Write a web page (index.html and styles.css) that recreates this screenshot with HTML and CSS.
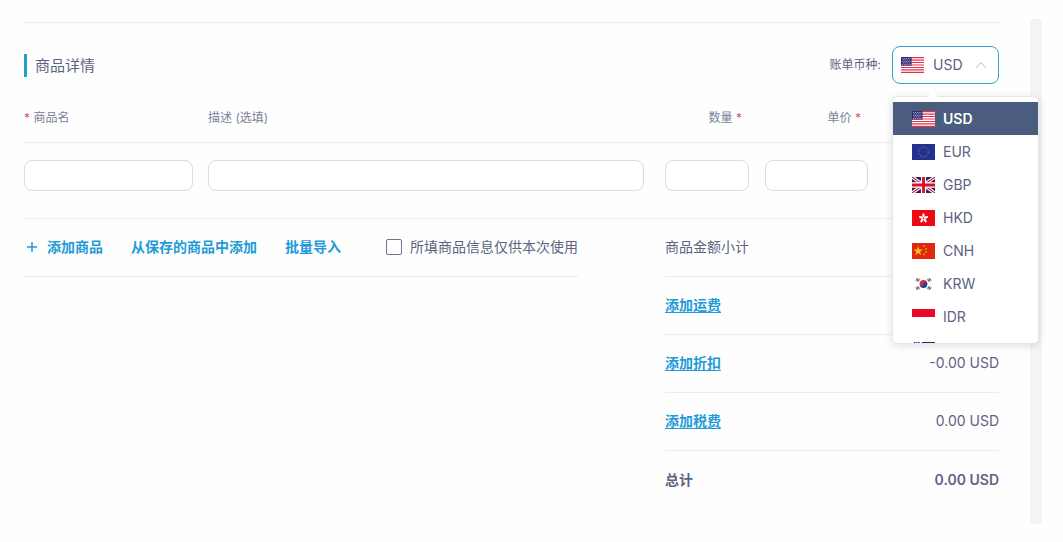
FILE: index.html
```html
<!DOCTYPE html>
<html lang="zh-CN">
<head>
<meta charset="utf-8">
<meta name="viewport" content="width=device-width, initial-scale=1">
<title>商品详情</title>
<link rel="stylesheet" href="styles.css">
</head>
<body>
<svg class="sprite" aria-hidden="true">
  <symbol id="us" viewBox="0 0 24 16" preserveAspectRatio="none">
    <path fill="#fff" d="M0 0h24v16H0z"/>
    <path stroke="#e8304c" stroke-width="1.23" d="M0 .6h24M0 3.1h24M0 5.5h24M0 8h24M0 10.5h24M0 12.9h24M0 15.4h24"/>
    <path fill="#27276f" d="M0 0h11v8.6H0z"/>
    <path stroke="#fff" stroke-width=".8" stroke-dasharray=".9 1.1" d="M1 1.4h9.500M2 2.900h8M1 4.400h9.500M2 5.900h8M1 7.400h9.500"/>
  </symbol>
  <symbol id="eu" viewBox="0 0 24 16" preserveAspectRatio="none">
    <path fill="#24308f" d="M0 0h24v16H0z"/>
    <circle cx="12" cy="8" r="5" fill="none" stroke="#a5a060" stroke-width="1" stroke-dasharray="1 1.618"/>
  </symbol>
  <symbol id="gb" viewBox="0 0 24 16" preserveAspectRatio="none">
    <path fill="#1c2466" d="M0 0h24v16H0z"/>
    <path stroke="#fff" stroke-width="3.400" d="M0 0l24 16M24 0L0 16"/>
    <path stroke="#d8203c" stroke-width="1.200" d="M0 0l24 16M24 0L0 16"/>
    <path stroke="#fff" stroke-width="5.400" d="M12 0v16M0 8h24"/>
    <path stroke="#d8102c" stroke-width="3" d="M12 0v16M0 8h24"/>
  </symbol>
  <symbol id="hk" viewBox="0 0 24 16" preserveAspectRatio="none">
    <path fill="#ee0a14" d="M0 0h24v16H0z"/>
    <g fill="#fff">
      <ellipse cx="12" cy="5.500" rx="1.200" ry="2.300"/>
      <ellipse cx="12" cy="5.500" rx="1.200" ry="2.300" transform="rotate(72 12 8.200)"/>
      <ellipse cx="12" cy="5.500" rx="1.200" ry="2.300" transform="rotate(144 12 8.200)"/>
      <ellipse cx="12" cy="5.500" rx="1.200" ry="2.300" transform="rotate(216 12 8.200)"/>
      <ellipse cx="12" cy="5.500" rx="1.200" ry="2.300" transform="rotate(288 12 8.200)"/>
    </g>
    <circle cx="12" cy="8.200" r=".7" fill="#ee0a14"/>
  </symbol>
  <symbol id="cn" viewBox="0 0 24 16" preserveAspectRatio="none">
    <path fill="#de2910" d="M0 0h24v16H0z"/>
    <path fill="#ffc21a" d="M6.500 3l1.200 3.500h3.700l-3 2.200 1.200 3.600-3.100-2.200-3.100 2.200 1.200-3.600-3-2.200h3.700z"/>
    <g fill="#f5a81a"><circle cx="12.500" cy="3.200" r=".9"/><circle cx="14.700" cy="5.800" r=".9"/><circle cx="14.700" cy="9" r=".9"/><circle cx="12.500" cy="11.500" r=".9"/></g>
  </symbol>
  <symbol id="kr" viewBox="0 0 24 16" preserveAspectRatio="none">
    <path fill="#fff" d="M0 0h24v16H0z"/>
    <path fill="#d52b43" d="M8 8a4 4 0 0 1 8 0z"/>
    <path fill="#24468f" d="M8 8a4 4 0 0 0 8 0z"/>
    <circle cx="10" cy="8" r="2" fill="#d52b43"/><circle cx="14" cy="8" r="2" fill="#24468f"/>
    <path stroke="#333" stroke-width=".9" d="M4 4.500l2-2.500M5 5.200l2-2.500M6 5.900l2-2.500M4 11.500l2 2.500M5 10.800l2 2.500M6 10.100l2 2.500M20 4.500l-2-2.500M19 5.200l-2-2.500M18 5.900l-2-2.500M20 11.500l-2 2.500M19 10.800l-2 2.500M18 10.100l-2 2.500"/>
  </symbol>
  <symbol id="id" viewBox="0 0 24 16" preserveAspectRatio="none">
    <path fill="#fff" d="M0 0h24v16H0z"/><path fill="#e60a24" d="M0 0h24v8H0z"/>
  </symbol>
  <symbol id="au" viewBox="0 0 24 16" preserveAspectRatio="none">
    <path fill="#1c2c78" d="M0 0h24v16H0z"/>
    <path stroke="#fff" stroke-width="1.800" d="M0 0l10 8M10 0L0 8"/>
    <path stroke="#fff" stroke-width="2.600" d="M5 0v8M0 4h10"/>
    <path stroke="#d8203c" stroke-width="1.400" d="M5 0v8M0 4h10"/>
  </symbol>
</svg>

<div class="page">
  <main class="content">
    <header class="section-head">
      <h1 class="section-title">商品详情</h1>
      <div class="currency">
        <label class="currency-label" for="currency">账单币种:</label>
        <div class="currency-box">
          <svg class="flag" aria-hidden="true"><use href="#us"/></svg>
          <select class="currency-select" id="currency"><option>USD</option></select>
          <svg class="chevron" viewBox="0 0 12 8" aria-hidden="true"><path d="M1 7l5-5.500L11 7"/></svg>
          <div class="menu">
            <ul class="menu-list">
              <li><button class="option selected" type="button"><svg class="flag" aria-hidden="true"><use href="#us"/></svg>USD</button></li>
              <li><button class="option" type="button"><svg class="flag" aria-hidden="true"><use href="#eu"/></svg>EUR</button></li>
              <li><button class="option" type="button"><svg class="flag" aria-hidden="true"><use href="#gb"/></svg>GBP</button></li>
              <li><button class="option" type="button"><svg class="flag" aria-hidden="true"><use href="#hk"/></svg>HKD</button></li>
              <li><button class="option" type="button"><svg class="flag" aria-hidden="true"><use href="#cn"/></svg>CNH</button></li>
              <li><button class="option" type="button"><svg class="flag" aria-hidden="true"><use href="#kr"/></svg>KRW</button></li>
              <li><button class="option" type="button"><svg class="flag" aria-hidden="true"><use href="#id"/></svg>IDR</button></li>
              <li><button class="option" type="button" aria-label="澳元"><svg class="flag" aria-hidden="true"><use href="#au"/></svg></button></li>
            </ul>
          </div>
        </div>
      </div>
    </header>

    <table class="items">
      <colgroup><col class="col-name"><col><col class="col-qty"><col class="col-price"><col class="col-sum"></colgroup>
      <thead>
        <tr>
          <th id="h-name"><span class="required">*</span> 商品名</th>
          <th id="h-desc">描述 (选填)</th>
          <th class="right" id="h-qty">数量 <span class="required">*</span></th>
          <th class="right price" id="h-price">单价 <span class="required">*</span></th>
          <td></td>
        </tr>
      </thead>
      <tbody>
        <tr>
          <td class="cell-name"><input class="field" type="text" aria-labelledby="h-name"></td>
          <td class="cell-desc"><input class="field" type="text" aria-labelledby="h-desc"></td>
          <td class="cell-qty"><input class="field" type="text" aria-labelledby="h-qty"></td>
          <td class="cell-price"><input class="field" type="text" aria-labelledby="h-price"></td>
          <td></td>
        </tr>
      </tbody>
    </table>

    <div class="below">
      <div class="actions">
        <button class="action" type="button"><svg class="plus" viewBox="0 0 12 12" aria-hidden="true"><path d="M6 1v10M1 6h10"/></svg>添加商品</button>
        <button class="action" type="button">从保存的商品中添加</button>
        <button class="action" type="button">批量导入</button>
        <label class="once"><input class="tick" type="checkbox">所填商品信息仅供本次使用</label>
      </div>
      <div class="totals">
        <div class="total-row"><span>商品金额小计</span></div>
        <div class="total-row"><a class="add" href="#">添加运费</a></div>
        <div class="total-row"><a class="add" href="#">添加折扣</a><span>-0.00 USD</span></div>
        <div class="total-row"><a class="add" href="#">添加税费</a><span>0.00 USD</span></div>
        <div class="total-row grand"><span>总计</span><span>0.00 USD</span></div>
      </div>
    </div>
  </main>
  <div class="gutter"></div>
</div>
</body>
</html>
```
FILE: styles.css
```css
* { box-sizing: border-box; }
body {
  margin: 0;
  background: #fefefe;
  color: #5c6480;
  font-family: Inter, "Noto Sans CJK SC", sans-serif;
  font-size: 14px;
  line-height: 20px;
}
button, input, select { font: inherit; color: inherit; }
.sprite { display: none; }
.page { display: flex; min-height: 100vh; padding-right: 21px; }
.content { flex: 1; min-width: 0; padding: 22px 31px 18px 24px; }
.gutter { width: 12px; margin: 19px 0 18px; background: #f4f4f4; }

.section-head {
  display: flex;
  justify-content: space-between;
  align-items: center;
  padding-top: 23px;
  border-top: 1px solid #ececec;
}
.section-title {
  margin: 0;
  padding-left: 8px;
  border-left: 3px solid #219fd0;
  font-size: 15px;
  line-height: 23px;
  font-weight: 400;
}
.currency { display: flex; align-items: center; gap: 11px; }
.currency-label { font-size: 12px; }
.currency-box {
  position: relative;
  display: flex;
  align-items: center;
  width: 107px;
  height: 38px;
  padding: 0 11px 0 8px;
  border: 1px solid #3a9fd6;
  border-radius: 8px;
  background: #fff;
}
.flag { flex: none; width: 23px; height: 16px; }
.currency-select {
  flex: 1;
  min-width: 0;
  padding: 0;
  margin-left: 9px;
  border: 0;
  background: none;
  appearance: none;
  outline: 0;
}
.chevron, .plus { flex: none; width: 12px; fill: none; stroke: #b5b8bd; }
.menu {
  position: absolute;
  top: 49px;
  left: -1px;
  z-index: 1;
  width: 147px;
  height: 248px;
  border: 1px solid #e8e8e8;
  border-radius: 5px;
  background: #fff;
  box-shadow: 0 2px 8px #0000001f;
}
.menu::before {
  content: "";
  position: absolute;
  top: -5px;
  left: 35px;
  border: 5px solid transparent;
  border-top: 0;
  border-bottom-color: #fff;
}
.menu-list { height: 100%; margin: 0; padding: 5px 0 0; overflow: hidden; list-style: none; }
.option {
  display: flex;
  align-items: center;
  gap: 8px;
  width: 100%;
  height: 33px;
  padding: 0 19px;
  border: 0;
  background: none;
}
.option.selected { background: #4b5d7f; color: #fff; font-weight: 600; }

.items { width: 100%; margin-top: 7px; table-layout: fixed; border-collapse: collapse; }
.items th, .items td { padding: 0; }
.items th { height: 51px; padding-top: 4px; color: #7a829b; font-size: 12px; font-weight: 400; text-align: left; }
.items .right { padding-right: 23px; text-align: right; }
.items .price { padding-right: 31px; }
.items tr { border-bottom: 1px solid #eee; }
.required { color: #e8506a; }
.col-name { width: 184px; }
.col-qty { width: 100px; }
.col-price { width: 127px; }
.col-sum { width: 107px; }
.items tbody td { height: 76px; padding-bottom: 10px; }
.items .cell-name { padding-right: 15px; }
.items .cell-desc { padding-right: 21px; }
.items .cell-qty { padding-right: 16px; }
.items .cell-price { padding-right: 24px; }
.field {
  display: block;
  width: 100%;
  height: 31px;
  padding: 0 10px;
  border: 1px solid #dcdcdc;
  border-radius: 8px;
  background: #fff;
}

.below { display: grid; grid-template-columns: minmax(0, 554px) 334px; justify-content: space-between; align-items: start; }
.actions {
  display: flex;
  align-items: center;
  gap: 28px;
  height: 58px;
  padding-left: 2px;
  border-bottom: 1px solid #ececec;
  white-space: nowrap;
}
.action {
  display: flex;
  align-items: center;
  gap: 9px;
  padding: 0;
  border: 0;
  background: none;
  color: #1f9bd8;
  font-weight: 600;
}
.plus { stroke: #1f9bd8; stroke-width: 1.5; }
.once { display: flex; align-items: center; gap: 8px; margin-left: auto; }
.tick {
  width: 16px;
  height: 16px;
  margin: 0;
  border: 1px solid #6b7390;
  border-radius: 2px;
  background: #fff;
  appearance: none;
}
.total-row {
  display: flex;
  align-items: center;
  justify-content: space-between;
  height: 58px;
  border-bottom: 1px solid #ececec;
}
.grand { border-bottom: 0; font-weight: 600; }
.add { color: #1f9bd8; font-weight: 600; text-underline-offset: 2px; }
```
